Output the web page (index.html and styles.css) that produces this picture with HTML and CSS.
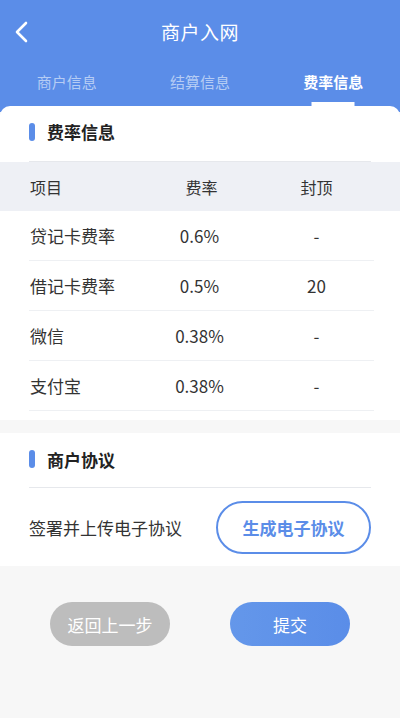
FILE: index.html
```html
<!DOCTYPE html>
<html lang="zh">
<head>
<meta charset="utf-8">
<link rel="stylesheet" href="styles.css">
</head>
<body>
<div class="page">
  <header class="top">
    <div class="nav">
      <svg class="back" width="16" height="24" viewBox="0 0 16 24"><path d="M13 3 L4 12 L13 21" fill="none" stroke="#fff" stroke-width="2.6" stroke-linecap="round" stroke-linejoin="round"/></svg>
      <h1 class="title">商户入网</h1>
    </div>
    <div class="tabs">
      <div class="tab">商户信息</div>
      <div class="tab">结算信息</div>
      <div class="tab active">费率信息</div>
    </div>
  </header>

  <section class="card first">
    <div class="sec-title"><span class="bar"></span>费率信息</div>
    <div class="table">
      <div class="row head"><span>项目</span><span>费率</span><span>封顶</span></div>
      <div class="row"><span>贷记卡费率</span><span>0.6%</span><span>-</span></div>
      <div class="row"><span>借记卡费率</span><span>0.5%</span><span>20</span></div>
      <div class="row"><span>微信</span><span>0.38%</span><span>-</span></div>
      <div class="row"><span>支付宝</span><span>0.38%</span><span>-</span></div>
    </div>
  </section>

  <section class="card second">
    <div class="sec-title"><span class="bar"></span>商户协议</div>
    <div class="agree">
      <span>签署并上传电子协议</span>
      <button class="outline">生成电子协议</button>
    </div>
  </section>

  <div class="actions">
    <button class="btn gray">返回上一步</button>
    <button class="btn blue">提交</button>
  </div>
</div>
</body>
</html>
```

FILE: styles.css
```css
* { box-sizing: border-box; margin: 0; padding: 0; }
html, body { width: 400px; height: 720px; }
body {
  font-family: "Noto Sans CJK SC", "Noto Sans", sans-serif;
  background: #fff;
  color: #333;
  overflow: hidden;
}
.page { height: 718px; background: #f7f7f7; }
.top {
  background: #5b8de8;
  height: 112px;
  color: #fff;
}
.nav {
  position: relative;
  height: 64px;
  display: flex;
  align-items: center;
  justify-content: center;
}
.back { position: absolute; left: 13px; top: 20px; }
.title { font-size: 19px; font-weight: 400; margin-top: -2px; letter-spacing: 0.5px; }
.tabs {
  display: flex;
  height: 42px;
}
.tab {
  flex: 1;
  text-align: center;
  font-size: 15px;
  color: #b5ccf4;
  line-height: 36px;
  position: relative;
}
.tab.active { color: #fff; font-weight: 700; }
.tab.active::after {
  content: "";
  position: absolute;
  left: 50%;
  transform: translateX(-50%);
  bottom: 0;
  width: 43px;
  height: 4px;
  background: #fff;
}
.card { background: #fff; }
.card.first {
  margin-top: -6px;
  border-radius: 10px 10px 0 0;
  position: relative;
}
.sec-title {
  display: flex;
  align-items: center;
  margin: 0 29px;
  height: 55px;
  border-bottom: 1px solid #e6e8ec;
  font-size: 17px;
  font-weight: 700;
  color: #222;
}
.card.first .sec-title { height: 56px; padding-bottom: 4px; }
.card.second .sec-title { padding-bottom: 2px; }
.bar {
  width: 6px;
  height: 18px;
  border-radius: 3px;
  background: #5b8de8;
  margin-right: 12px;
}
.table { padding-bottom: 9px; }
.row {
  display: grid;
  grid-template-columns: 1fr 1fr 1fr;
  align-items: center;
  height: 50px;
  margin: 0 26px 0 29px;
  border-bottom: 1px solid #eef0f3;
  font-size: 17px;
  color: #333;
}
.row span:nth-child(2) { text-align: center; padding-right: 4px; }
.row span:nth-child(3) { text-align: center; }
.row span:first-child { padding-left: 1px; }
.row.head {
  margin: 0;
  padding: 0 26px 0 29px;
  height: 49px;
  background: #eef0f5;
  border-bottom: none;
  font-size: 16px;
}
.row.head span:nth-child(2) { padding-right: 0; }
.card.second { margin-top: 13px; }
.agree {
  display: flex;
  align-items: center;
  justify-content: space-between;
  margin: 0 29px 0 29px;
  height: 78px;
  font-size: 17px;
  color: #333;
}
.outline {
  width: 155px;
  height: 53px;
  border: 2px solid #5b8de8;
  border-radius: 27px;
  background: #fff;
  color: #5b8de8;
  font-family: inherit;
  font-size: 17px;
  font-weight: 700;
}
.actions {
  display: flex;
  justify-content: center;
  gap: 60px;
  padding-top: 36px;
}
.btn {
  width: 120px;
  height: 44px;
  border: none;
  border-radius: 22px;
  color: #fff;
  font-family: inherit;
  font-size: 17px;
}
.btn.gray { background: #bdbdbd; }
.btn.blue { background: linear-gradient(90deg, #6497ea, #5a8de8); }
```
